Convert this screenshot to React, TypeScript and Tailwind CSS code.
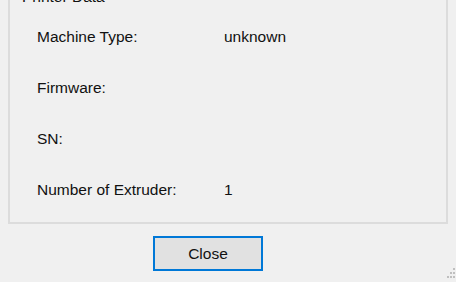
const rows: { label: string; value: string }[] = [
  { label: "Machine Type:", value: "unknown" },
  { label: "Firmware:", value: "" },
  { label: "SN:", value: "" },
  { label: "Number of Extruder:", value: "1" },
];

function SizeGrip() {
  const dots = [
    [6, 0],
    [3, 4],
    [6, 4],
    [0, 8],
    [3, 8],
    [6, 8],
  ];
  return (
    <svg className="absolute right-0 bottom-0" width="9" height="15" viewBox="0 0 9 15">
      {dots.map(([x, y], i) => (
        <rect key={i} x={x} y={y + 1} width="2" height="2" fill="#bfbfbf" />
      ))}
    </svg>
  );
}

export default function App() {
  return (
    <div
      className="relative h-[282px] w-[456px] overflow-hidden bg-[#f0f0f0] text-[15.5px] leading-[18px] text-[#111]"
      style={{ fontFamily: '"Liberation Sans", Arial, sans-serif' }}
    >
      <div className="relative mx-2 mt-[-3px] border-2 border-[#dcdcdc] pt-[29px] pb-[23px] pl-[27px]">
        <span className="absolute -top-[11px] left-[10px] bg-[#f0f0f0] px-[2px]">Printer Data</span>
        <div className="flex flex-col gap-[33px]">
          {rows.map((r) => (
            <div key={r.label} className="flex h-[18px] items-center">
              <span className="w-[187px]">{r.label}</span>
              <span>{r.value}</span>
            </div>
          ))}
        </div>
      </div>
      <button className="mt-[12px] ml-[153px] flex h-[35px] w-[110px] items-center justify-center border-2 border-[#0078d7] bg-[#e1e1e1] text-[15.5px]">
        Close
      </button>
      <SizeGrip />
    </div>
  );
}
